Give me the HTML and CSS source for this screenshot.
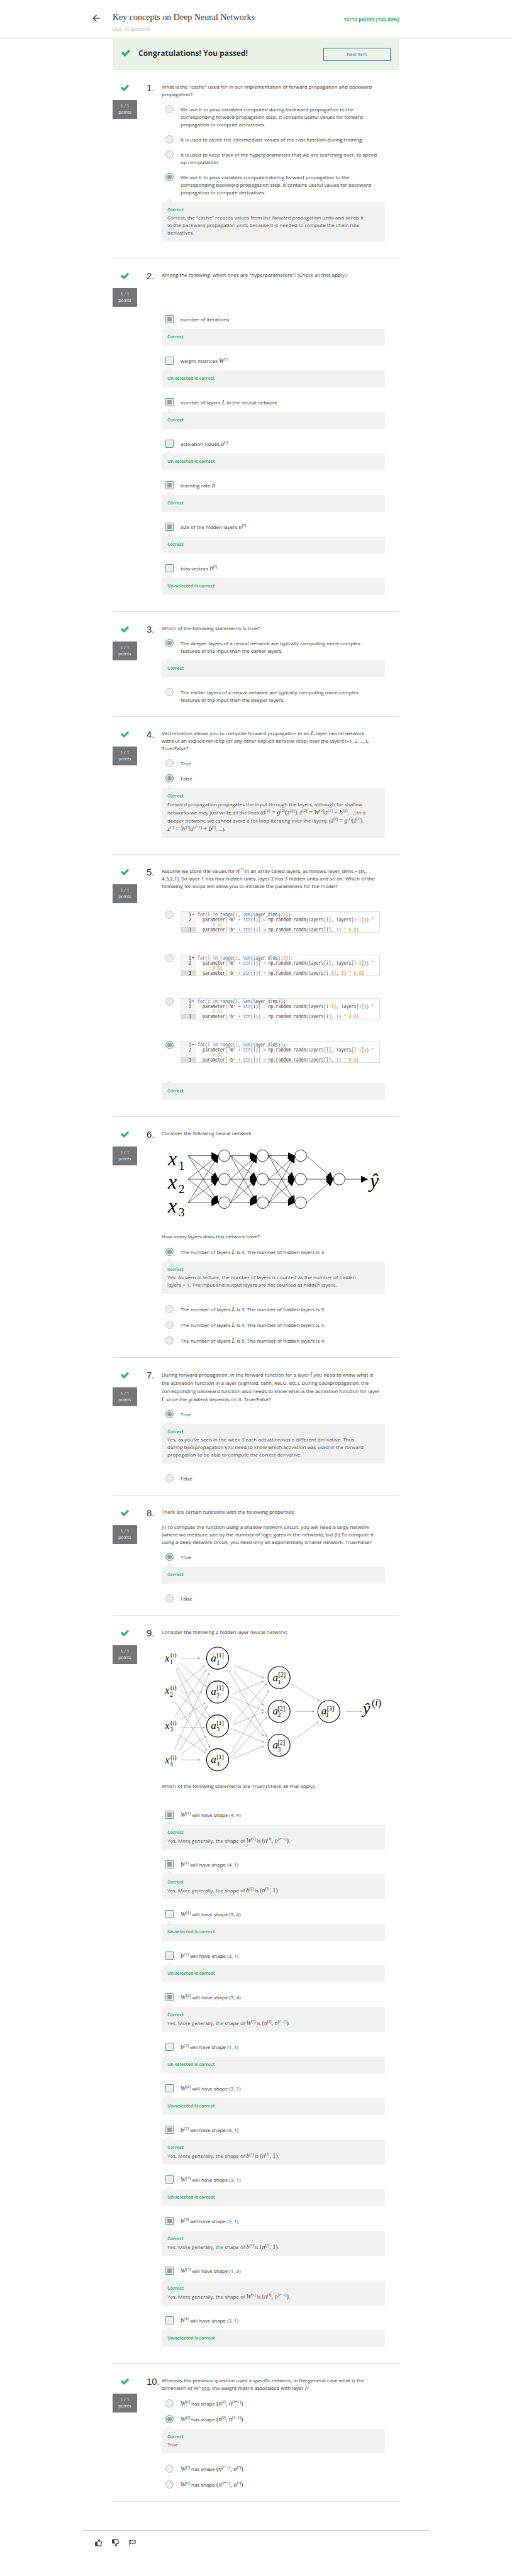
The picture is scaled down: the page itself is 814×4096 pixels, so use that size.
FILE: index.html
```
<!DOCTYPE html>
<html lang="en">
<head>
<meta charset="utf-8">
<meta name="viewport" content="width=device-width, initial-scale=1">
<title>Key concepts on Deep Neural Networks</title>
<link rel="stylesheet" href="styles.css">
</head>
<body>
<svg class="defs" aria-hidden="true">
  <symbol id="check" viewBox="121 356 1550 1188"><path d="M1671 566q0 40-28 68l-724 724-136 136q-28 28-68 28t-68-28l-136-136-362-362q-28-28-28-68t28-68l136-136q28-28 68-28t68 28l294 295 656-657q28-28 68-28t68 28l136 136q28 28 28 68z"/></symbol>
</svg>

<header class="top">
  <div class="wrap top-row">
    <a class="back" href="#" aria-label="Back"><svg viewBox="0 0 12 12"><path d="M6.6 .7 1.2 6l5.4 5.3M1.4 6H12"/></svg></a>
    <div class="titles">
      <h1>Key concepts on Deep Neural Networks</h1>
      <p>Quiz, 10 questions</p>
    </div>
    <strong class="score">10/10 points (100.00%)</strong>
  </div>
</header>

<main class="wrap">
  <div class="banner">
    <svg class="tick big"><use href="#check"/></svg>
    <h2>Congratulations! You passed!</h2>
    <button type="button" class="next">Next Item</button>
  </div>

  <section class="q">
    <div class="grade"><svg class="tick"><use href="#check"/></svg><p class="points">1 / 1<br>points</p></div>
    <div class="num">1.</div>
    <div class="body">
      <p class="ask">What is the "cache" used for in our implementation of forward propagation and backward<br>propagation?</p>
      <div class="opts">
        <label class="opt"><input type="radio" name="q1"><span>We use it to pass variables computed during backward propagation to the<br>corresponding forward propagation step. It contains useful values for forward<br>propagation to compute activations.</span></label>
        <label class="opt"><input type="radio" name="q1"><span>It is used to cache the intermediate values of the cost function during training.</span></label>
        <label class="opt"><input type="radio" name="q1"><span>It is used to keep track of the hyperparameters that we are searching over, to speed<br>up computation.</span></label>
        <div>
          <label class="opt"><input type="radio" name="q1" checked><span>We use it to pass variables computed during forward propagation to the<br>corresponding backward propagation step. It contains useful values for backward<br>propagation to compute derivatives.</span></label>
          <div class="fb"><b>Correct</b><p>Correct, the "cache" records values from the forward propagation units and sends it<br>to the backward propagation units because it is needed to compute the chain rule<br>derivatives.</p></div>
        </div>
      </div>
    </div>
  </section>

  <section class="q">
    <div class="grade"><svg class="tick"><use href="#check"/></svg><p class="points">1 / 1<br>points</p></div>
    <div class="num">2.</div>
    <div class="body">
      <p class="ask">Among the following, which ones are "hyperparameters"? (Check all that apply.)</p>
      <div class="opts far">
        <div><label class="opt"><input type="checkbox" checked><span>number of iterations</span></label><div class="fb"><b>Correct</b></div></div>
        <div><label class="opt"><input type="checkbox"><span>weight matrices <var>W</var><sup>[<i>l</i>]</sup></span></label><div class="fb"><b>Un-selected is correct</b></div></div>
        <div><label class="opt"><input type="checkbox" checked><span>number of layers <var>L</var> in the neural network</span></label><div class="fb"><b>Correct</b></div></div>
        <div><label class="opt"><input type="checkbox"><span>activation values <var>a</var><sup>[<i>l</i>]</sup></span></label><div class="fb"><b>Un-selected is correct</b></div></div>
        <div><label class="opt"><input type="checkbox" checked><span>learning rate <var>α</var></span></label><div class="fb"><b>Correct</b></div></div>
        <div><label class="opt"><input type="checkbox" checked><span>size of the hidden layers <var>n</var><sup>[<i>l</i>]</sup></span></label><div class="fb"><b>Correct</b></div></div>
        <div><label class="opt"><input type="checkbox"><span>bias vectors <var>b</var><sup>[<i>l</i>]</sup></span></label><div class="fb"><b>Un-selected is correct</b></div></div>
      </div>
    </div>
  </section>

  <section class="q">
    <div class="grade"><svg class="tick"><use href="#check"/></svg><p class="points">1 / 1<br>points</p></div>
    <div class="num">3.</div>
    <div class="body">
      <p class="ask">Which of the following statements is true?</p>
      <div class="opts">
        <div>
          <label class="opt"><input type="radio" name="q3" checked><span>The deeper layers of a neural network are typically computing more complex<br>features of the input than the earlier layers.</span></label>
          <div class="fb"><b>Correct</b></div>
        </div>
        <label class="opt"><input type="radio" name="q3"><span>The earlier layers of a neural network are typically computing more complex<br>features of the input than the deeper layers.</span></label>
      </div>
    </div>
  </section>

  <section class="q">
    <div class="grade"><svg class="tick"><use href="#check"/></svg><p class="points">1 / 1<br>points</p></div>
    <div class="num">4.</div>
    <div class="body">
      <p class="ask">Vectorization allows you to compute forward propagation in an <var>L</var>-layer neural network<br>without an explicit for-loop (or any other explicit iterative loop) over the layers l=1, 2, ...,L.<br>True/False?</p>
      <div class="opts">
        <label class="opt"><input type="radio" name="q4"><span>True</span></label>
        <div>
          <label class="opt"><input type="radio" name="q4" checked><span>False</span></label>
          <div class="fb"><b>Correct</b><p class="loose">Forward propagation propagates the input through the layers, although for shallow<br>networks we may just write all the lines (<span class="eq"><var>a</var><sup>[2]</sup> = <var>g</var><sup>[2]</sup>(<var>z</var><sup>[2]</sup>)</span>, <span class="eq"><var>z</var><sup>[2]</sup> = <var>W</var><sup>[2]</sup><var>a</var><sup>[1]</sup> + <var>b</var><sup>[2]</sup></span>, ...) in a<br>deeper network, we cannot avoid a for loop iterating over the layers: (<span class="eq"><var>a</var><sup>[<i>l</i>]</sup> = <var>g</var><sup>[<i>l</i>]</sup>(<var>z</var><sup>[<i>l</i>]</sup>)</span>,<br><span class="eq"><var>z</var><sup>[<i>l</i>]</sup> = <var>W</var><sup>[<i>l</i>]</sup><var>a</var><sup>[<i>l</i>−1]</sup> + <var>b</var><sup>[<i>l</i>]</sup></span>, ...).</p></div>
        </div>
      </div>
    </div>
  </section>

  <section class="q">
    <div class="grade"><svg class="tick"><use href="#check"/></svg><p class="points">1 / 1<br>points</p></div>
    <div class="num">5.</div>
    <div class="body">
      <p class="ask">Assume we store the values for <var>n</var><sup>[<i>l</i>]</sup> in an array called layers, as follows: layer_dims = [<var>n</var><sub>x</sub>,<br>4,3,2,1]. So layer 1 has four hidden units, layer 2 has 3 hidden units and so on. Which of the<br>following for-loops will allow you to initialize the parameters for the model?</p>
      <div class="opts mid">
        <label class="opt code-opt"><input type="radio" name="q5"><span class="code">
          <span class="ln fold">1</span><code><i class="k">for</i>(i <i class="k">in</i> <i class="f">range</i>(<i class="n">1</i>, <i class="f">len</i>(layer_dims)<i class="o">/</i><i class="n">2</i>)):</code>
          <span class="ln">2</span><code>  parameter[<i class="s">‘</i>W<i class="s">’</i> <i class="o">+</i> <i class="f">str</i>(i)] <i class="o">=</i> np.random.randn(layers[i], layers[i<i class="o">-</i><i class="n">1</i>])) <i class="o">*</i>
      <i class="n">0.01</i></code>
          <span class="ln on">3</span><code>  parameter[<i class="s">‘</i>b<i class="s">’</i> <i class="o">+</i> <i class="f">str</i>(i)] <i class="o">=</i> np.random.randn(layers[i], <i class="n">1</i>) <i class="o">*</i> <i class="n cur">0.01</i></code>
        </span></label>
        <label class="opt code-opt"><input type="radio" name="q5"><span class="code">
          <span class="ln fold">1</span><code><i class="k">for</i>(i <i class="k">in</i> <i class="f">range</i>(<i class="n">1</i>, <i class="f">len</i>(layer_dims)<i class="o">/</i><i class="n">2</i>)):</code>
          <span class="ln">2</span><code>  parameter[<i class="s">‘</i>W<i class="s">’</i> <i class="o">+</i> <i class="f">str</i>(i)] <i class="o">=</i> np.random.randn(layers[i], layers[i<i class="o">-</i><i class="n">1</i>])) <i class="o">*</i>
      <i class="n">0.01</i></code>
          <span class="ln on">3</span><code>  parameter[<i class="s">‘</i>b<i class="s">’</i> <i class="o">+</i> <i class="f">str</i>(i)] <i class="o">=</i> np.random.randn(layers[i<i class="o">-</i><i class="n">1</i>], <i class="n">1</i>) <i class="o">*</i> <i class="n cur">0.01</i></code>
        </span></label>
        <label class="opt code-opt"><input type="radio" name="q5"><span class="code">
          <span class="ln fold">1</span><code><i class="k">for</i>(i <i class="k">in</i> <i class="f">range</i>(<i class="n">1</i>, <i class="f">len</i>(layer_dims))):</code>
          <span class="ln">2</span><code>  parameter[<i class="s">‘</i>W<i class="s">’</i> <i class="o">+</i> <i class="f">str</i>(i)] <i class="o">=</i> np.random.randn(layers[i<i class="o">-</i><i class="n">1</i>], layers[i])) <i class="o">*</i>
      <i class="n">0.01</i></code>
          <span class="ln on">3</span><code>  parameter[<i class="s">‘</i>b<i class="s">’</i> <i class="o">+</i> <i class="f">str</i>(i)] <i class="o">=</i> np.random.randn(layers[i], <i class="n">1</i>) <i class="o">*</i> <i class="n cur">0.01</i></code>
        </span></label>
        <div>
          <label class="opt code-opt"><input type="radio" name="q5" checked><span class="code">
          <span class="ln fold">1</span><code><i class="k">for</i>(i <i class="k">in</i> <i class="f">range</i>(<i class="n">1</i>, <i class="f">len</i>(layer_dims))):</code>
          <span class="ln">2</span><code>  parameter[<i class="s">‘</i>W<i class="s">’</i> <i class="o">+</i> <i class="f">str</i>(i)] <i class="o">=</i> np.random.randn(layers[i], layers[i<i class="o">-</i><i class="n">1</i>])) <i class="o">*</i>
      <i class="n">0.01</i></code>
          <span class="ln on">3</span><code>  parameter[<i class="s">‘</i>b<i class="s">’</i> <i class="o">+</i> <i class="f">str</i>(i)] <i class="o">=</i> np.random.randn(layers[i], <i class="n">1</i>) <i class="o">*</i> <i class="n cur">0.01</i></code>
          </span></label>
          <div class="fb"><b>Correct</b></div>
        </div>
      </div>
    </div>
  </section>

  <section class="q">
    <div class="grade"><svg class="tick"><use href="#check"/></svg><p class="points">1 / 1<br>points</p></div>
    <div class="num">6.</div>
    <div class="body">
      <p class="ask">Consider the following neural network.</p>
      <svg class="net" viewBox="0 0 354 152" role="img" aria-label="Network with three inputs, three hidden layers of three units and one output">
        <defs><marker id="head" viewBox="0 0 10 10" refX="10" refY="5" markerWidth="11" markerHeight="11" markerUnits="userSpaceOnUse" orient="auto"><path d="M0 0 10 5 0 10z"/></marker></defs>
        <g class="wire">
          <path d="M42 29.5H90"/><path d="M42 29.5 90 66.8"/><path d="M42 29.5 90 104"/>
          <path d="M42 66.8 90 29.5"/><path d="M42 66.8H90"/><path d="M42 66.8 90 104"/>
          <path d="M42 104 90 29.5"/><path d="M42 104 90 66.8"/><path d="M42 104H90"/>
          <path d="M109 29.5H151"/><path d="M109 29.5 151 66.8"/><path d="M109 29.5 151 104"/>
          <path d="M109 66.8 151 29.5"/><path d="M109 66.8H151"/><path d="M109 66.8 151 104"/>
          <path d="M109 104 151 29.5"/><path d="M109 104 151 66.8"/><path d="M109 104H151"/>
          <path d="M170 29.5H211"/><path d="M170 29.5 211 66.8"/><path d="M170 29.5 211 104"/>
          <path d="M170 66.8 211 29.5"/><path d="M170 66.8H211"/><path d="M170 66.8 211 104"/>
          <path d="M170 104 211 29.5"/><path d="M170 104 211 66.8"/><path d="M170 104H211"/>
          <path d="M230 29.5 272 66.8"/><path d="M230 66.8H272"/><path d="M230 104 272 66.8"/>
          <path d="M291 66.8H327"/>
        </g>
        <g class="unit">
          <circle cx="99.4" cy="29.5" r="9.2"/><circle cx="99.4" cy="66.8" r="9.2"/><circle cx="99.4" cy="104" r="9.2"/>
          <circle cx="160.1" cy="29.5" r="9.2"/><circle cx="160.1" cy="66.8" r="9.2"/><circle cx="160.1" cy="104" r="9.2"/>
          <circle cx="220.4" cy="29.5" r="9.2"/><circle cx="220.4" cy="66.8" r="9.2"/><circle cx="220.4" cy="104" r="9.2"/>
          <circle cx="281.5" cy="66.8" r="9.2"/>
        </g>
        <g class="m32"><text x="10" y="45">x</text><text x="10" y="82">x</text><text x="10" y="120">x</text><text x="330" y="80">ŷ</text></g>
        <g class="m19"><text x="27" y="52">1</text><text x="27" y="89">2</text><text x="27" y="126">3</text></g>
      </svg>
      <p class="ask">How many layers does this network have?</p>
      <div class="opts tall">
        <div>
          <label class="opt"><input type="radio" name="q6" checked><span>The number of layers <var>L</var> is 4. The number of hidden layers is 3.</span></label>
          <div class="fb"><b>Correct</b><p>Yes. As seen in lecture, the number of layers is counted as the number of hidden<br>layers + 1. The input and output layers are not counted as hidden layers.</p></div>
        </div>
        <label class="opt"><input type="radio" name="q6"><span>The number of layers <var>L</var> is 3. The number of hidden layers is 3.</span></label>
        <label class="opt"><input type="radio" name="q6"><span>The number of layers <var>L</var> is 4. The number of hidden layers is 4.</span></label>
        <label class="opt"><input type="radio" name="q6"><span>The number of layers <var>L</var> is 5. The number of hidden layers is 4.</span></label>
      </div>
    </div>
  </section>

  <section class="q">
    <div class="grade"><svg class="tick"><use href="#check"/></svg><p class="points">1 / 1<br>points</p></div>
    <div class="num">7.</div>
    <div class="body">
      <p class="ask loose">During forward propagation, in the forward function for a layer <var>l</var> you need to know what is<br>the activation function in a layer (Sigmoid, tanh, ReLU, etc.). During backpropagation, the<br>corresponding backward function also needs to know what is the activation function for layer<br><var>l</var>, since the gradient depends on it. True/False?</p>
      <div class="opts">
        <div>
          <label class="opt"><input type="radio" name="q7" checked><span>True</span></label>
          <div class="fb"><b>Correct</b><p>Yes, as you've seen in the week 3 each activation has a different derivative. Thus,<br>during backpropagation you need to know which activation was used in the forward<br>propagation to be able to compute the correct derivative.</p></div>
        </div>
        <label class="opt"><input type="radio" name="q7"><span>False</span></label>
      </div>
    </div>
  </section>

  <section class="q">
    <div class="grade"><svg class="tick"><use href="#check"/></svg><p class="points">1 / 1<br>points</p></div>
    <div class="num">8.</div>
    <div class="body">
      <p class="ask">There are certain functions with the following properties:</p>
      <p class="ask more">(i) To compute the function using a shallow network circuit, you will need a large network<br>(where we measure size by the number of logic gates in the network), but (ii) To compute it<br>using a deep network circuit, you need only an exponentially smaller network. True/False?</p>
      <div class="opts">
        <div>
          <label class="opt"><input type="radio" name="q8" checked><span>True</span></label>
          <div class="fb"><b>Correct</b></div>
        </div>
        <label class="opt"><input type="radio" name="q8"><span>False</span></label>
      </div>
    </div>
  </section>

  <section class="q">
    <div class="grade"><svg class="tick"><use href="#check"/></svg><p class="points">1 / 1<br>points</p></div>
    <div class="num">9.</div>
    <div class="body">
      <p class="ask">Consider the following 2 hidden layer neural network:</p>
      <svg class="net" viewBox="0 0 354 232" role="img" aria-label="Network with four inputs, hidden layers of four and three units and one output">
        <defs><marker id="tip" viewBox="0 0 10 10" refX="8" refY="5" markerWidth="3" markerHeight="3" markerUnits="userSpaceOnUse" orient="auto"><path fill="#85878d" d="M0 0 10 5 0 10z"/></marker></defs>
        <g class="thin">
          <path d="M30.9 35.5H60.3"/><path d="M28.3 42 70.9 80.6"/><path d="M24 48.5 76.5 128.1"/><path d="M22.7 52.1 76.2 177.1"/>
          <path d="M28.3 80.4 68 47.5"/><path d="M30.9 89.2H64.3"/><path d="M28 94.6 70.9 130.6"/><path d="M20.9 104.2 71.7 181.8"/>
          <path d="M21.1 127.7 70.9 54"/><path d="M29.6 133.8 68.8 105.7"/><path d="M30.4 145.7H68"/><path d="M26.9 157 69.3 186"/>
          <path d="M20.3 180.3 75.1 59.4"/><path d="M28.3 182.6 72 112.2"/><path d="M30.9 187.8 70.1 159.3"/><path d="M30.9 196.8H60.3"/>
          <path d="M113 46.2 161.5 66.7"/><path d="M113 54.6 161.5 109.9"/><path d="M106.1 54.6 166.3 159.6"/>
          <path d="M113 92.5 161.5 72"/><path d="M113 97.9 161.5 118.7"/><path d="M113 103.8 161.5 158.9"/>
          <path d="M113 138.6 166.3 76"/><path d="M113 141.3 161.5 121"/><path d="M113 148.2 161.5 168.6"/>
          <path d="M109 188 170.2 86.8"/><path d="M108.3 195.2 166.3 129.4"/><path d="M113 195.2 161.5 174.8"/>
          <path d="M205.5 75.7 250 103.4"/><path d="M212.3 119.9H241.5"/><path d="M205.5 168.4 248.6 136.5"/><path d="M292.3 119.9H317.2"/>
        </g>
        <g class="ring">
          <circle cx="88.7" cy="35.5" r="17.5"/><circle cx="88.7" cy="89.2" r="17.5"/><circle cx="88.7" cy="143" r="17.5"/><circle cx="88.7" cy="196.6" r="17.5"/>
          <circle cx="186.1" cy="66.3" r="17.5"/><circle cx="186.1" cy="119.9" r="17.5"/><circle cx="186.1" cy="173.6" r="17.5"/>
          <circle cx="265.1" cy="119.9" r="17.5"/>
        </g>
        <g class="m17">
          <text x="5" y="41">x</text><text x="5" y="92">x</text><text x="5" y="148">x</text><text x="5" y="202">x</text>
          <text x="78" y="41">a</text><text x="78" y="94">a</text><text x="78" y="148">a</text><text x="78" y="201">a</text>
          <text x="176" y="72">a</text><text x="176" y="125">a</text><text x="176" y="179">a</text><text x="253" y="125">a</text>
        </g>
        <g class="m10">
          <text x="14" y="34">(<tspan class="it">i</tspan>)</text><text x="14" y="86">(<tspan class="it">i</tspan>)</text><text x="14" y="142">(<tspan class="it">i</tspan>)</text><text x="14" y="196">(<tspan class="it">i</tspan>)</text>
          <text x="13" y="45">1</text><text x="13" y="97">2</text><text x="13" y="152">3</text><text x="13" y="206">4</text>
          <text x="87" y="34">[1]</text><text x="87" y="86">[1]</text><text x="87" y="142">[1]</text><text x="87" y="195">[1]</text>
          <text x="87" y="46">1</text><text x="87" y="98">2</text><text x="87" y="152">3</text><text x="87" y="206">4</text>
          <text x="185" y="65">[2]</text><text x="184" y="119">[2]</text><text x="184" y="173">[2]</text><text x="262" y="119">[3]</text>
          <text x="184" y="77">1</text><text x="184" y="129">2</text><text x="184" y="183">3</text><text x="260" y="129">1</text>
        </g>
        <g class="m26"><text x="319" y="124">ŷ</text></g>
        <g class="m16"><text x="333" y="112">(<tspan class="it">i</tspan>)</text></g>
      </svg>
      <p class="ask">Which of the following statements are True? (Check all that apply).</p>
      <div class="opts mid">
        <div><label class="opt"><input type="checkbox" checked><span><var>W</var><sup>[1]</sup> will have shape (4, 4)</span></label><div class="fb"><b>Correct</b><p class="loose">Yes. More generally, the shape of <var>W</var><sup>[<i>l</i>]</sup> is <span class="eq">(<var>n</var><sup>[<i>l</i>]</sup>, <var>n</var><sup>[<i>l</i>−1]</sup>)</span>.</p></div></div>
        <div><label class="opt"><input type="checkbox" checked><span><var>b</var><sup>[1]</sup> will have shape (4, 1)</span></label><div class="fb"><b>Correct</b><p class="loose">Yes. More generally, the shape of <var>b</var><sup>[<i>l</i>]</sup> is <span class="eq">(<var>n</var><sup>[<i>l</i>]</sup>, 1)</span>.</p></div></div>
        <div><label class="opt"><input type="checkbox"><span><var>W</var><sup>[1]</sup> will have shape (3, 4)</span></label><div class="fb"><b>Un-selected is correct</b></div></div>
        <div><label class="opt"><input type="checkbox"><span><var>b</var><sup>[1]</sup> will have shape (3, 1)</span></label><div class="fb"><b>Un-selected is correct</b></div></div>
        <div><label class="opt"><input type="checkbox" checked><span><var>W</var><sup>[2]</sup> will have shape (3, 4)</span></label><div class="fb"><b>Correct</b><p class="loose">Yes. More generally, the shape of <var>W</var><sup>[<i>l</i>]</sup> is <span class="eq">(<var>n</var><sup>[<i>l</i>]</sup>, <var>n</var><sup>[<i>l</i>−1]</sup>)</span>.</p></div></div>
        <div><label class="opt"><input type="checkbox"><span><var>b</var><sup>[2]</sup> will have shape (1, 1)</span></label><div class="fb"><b>Un-selected is correct</b></div></div>
        <div><label class="opt"><input type="checkbox"><span><var>W</var><sup>[2]</sup> will have shape (3, 1)</span></label><div class="fb"><b>Un-selected is correct</b></div></div>
        <div><label class="opt"><input type="checkbox" checked><span><var>b</var><sup>[2]</sup> will have shape (3, 1)</span></label><div class="fb"><b>Correct</b><p class="loose">Yes. More generally, the shape of <var>b</var><sup>[<i>l</i>]</sup> is <span class="eq">(<var>n</var><sup>[<i>l</i>]</sup>, 1)</span>.</p></div></div>
        <div><label class="opt"><input type="checkbox"><span><var>W</var><sup>[3]</sup> will have shape (3, 1)</span></label><div class="fb"><b>Un-selected is correct</b></div></div>
        <div><label class="opt"><input type="checkbox" checked><span><var>b</var><sup>[3]</sup> will have shape (1, 1)</span></label><div class="fb"><b>Correct</b><p class="loose">Yes. More generally, the shape of <var>b</var><sup>[<i>l</i>]</sup> is <span class="eq">(<var>n</var><sup>[<i>l</i>]</sup>, 1)</span>.</p></div></div>
        <div><label class="opt"><input type="checkbox" checked><span><var>W</var><sup>[3]</sup> will have shape (1, 3)</span></label><div class="fb"><b>Correct</b><p class="loose">Yes. More generally, the shape of <var>W</var><sup>[<i>l</i>]</sup> is <span class="eq">(<var>n</var><sup>[<i>l</i>]</sup>, <var>n</var><sup>[<i>l</i>−1]</sup>)</span>.</p></div></div>
        <div><label class="opt"><input type="checkbox"><span><var>b</var><sup>[3]</sup> will have shape (3, 1)</span></label><div class="fb"><b>Un-selected is correct</b></div></div>
      </div>
    </div>
  </section>

  <section class="q">
    <div class="grade"><svg class="tick"><use href="#check"/></svg><p class="points">1 / 1<br>points</p></div>
    <div class="num">10.</div>
    <div class="body">
      <p class="ask">Whereas the previous question used a specific network, in the general case what is the<br>dimension of W^{[l]}, the weight matrix associated with layer <var>l</var>?</p>
      <div class="opts tall">
        <label class="opt"><input type="radio" name="q10"><span><var>W</var><sup>[<i>l</i>]</sup> has shape <span class="eq">(<var>n</var><sup>[<i>l</i>]</sup>, <var>n</var><sup>[<i>l</i>+1]</sup>)</span></span></label>
        <div>
          <label class="opt"><input type="radio" name="q10" checked><span><var>W</var><sup>[<i>l</i>]</sup> has shape <span class="eq">(<var>n</var><sup>[<i>l</i>]</sup>, <var>n</var><sup>[<i>l</i>−1]</sup>)</span></span></label>
          <div class="fb"><b>Correct</b><p>True</p></div>
        </div>
        <label class="opt"><input type="radio" name="q10"><span><var>W</var><sup>[<i>l</i>]</sup> has shape <span class="eq">(<var>n</var><sup>[<i>l</i>−1]</sup>, <var>n</var><sup>[<i>l</i>]</sup>)</span></span></label>
        <label class="opt"><input type="radio" name="q10"><span><var>W</var><sup>[<i>l</i>]</sup> has shape <span class="eq">(<var>n</var><sup>[<i>l</i>+1]</sup>, <var>n</var><sup>[<i>l</i>]</sup>)</span></span></label>
      </div>
    </div>
  </section>
</main>

<footer class="foot">
  <button type="button" aria-label="Like"><svg viewBox="0 0 18 20"><path d="M5.5 9.5C8 7.5 9 5.5 9.2 3.2 9.4 1 12.3 1.2 12.2 4c0 1.500-.5 2.500-.9 3.500h4.200c1.500 0 1.800 1.300 1.300 2.500l-.6 6.500c-.2 1.500-.9 2-2 2H9c-1.500 0-2.500-.6-3.500-1.300z"/><path class="solid" d="M1 9h4.500v9H1z"/></svg></button>
  <button type="button" aria-label="Dislike"><svg viewBox="0 0 18 20"><path d="M5.5 10.5C8 12.500 9 14.500 9.200 16.800c.2 2.200 3.100 2 3-.8 0-1.500-.5-2.500-.9-3.500h4.200c1.500 0 1.800-1.300 1.300-2.500l-.6-6.500c-.2-1.500-.9-2-2-2H9C7.500 1.500 6.500 2.100 5.500 2.800z"/><path class="solid" d="M1 2h4.500v9H1z"/></svg></button>
  <button type="button" aria-label="Report"><svg viewBox="0 0 20 20"><path d="M2 1.500V19M3.500 4C7 2.500 9 3 11.500 4s4.500.8 7-.5V12c-2.500 1.300-4.500 1.500-7 .5s-4.500-1.500-8 0z"/></svg></button>
</footer>
</body>
</html>
```

FILE: styles.css
```
* { box-sizing: border-box; }

body {
  margin: 0;
  background: #fff;
  color: #333;
  font: 8px/12px "Open Sans", "Noto Sans", sans-serif;
}

h1, h2, p { margin: 0; }
button { padding: 0; font: inherit; background: none; border: 0; }

.defs { position: absolute; width: 0; height: 0; }
.wrap { max-width: 456px; margin: 0 auto; }

/* header */
.top { height: 61px; border-bottom: 1px solid #bbb; }
.top-row { display: flex; padding-top: 18px; }
.back { width: 32px; margin-left: -32px; padding-top: 5px; }
.back svg { display: block; width: 12px; height: 12px; fill: none; stroke: #1f1f1f; stroke-width: 1.2; }
.titles { flex: 1; }
.titles h1 { font: 400 14px/20px "Liberation Serif", serif; }
.titles p { margin-top: 3px; font-size: 7px; color: #bbb; }
.score { padding-top: 7px; font-size: 8px; color: #2ab573; }

/* result banner */
.banner {
  display: flex;
  align-items: center;
  height: 49px;
  margin: 1px 0;
  padding: 0 14px 4px;
  background: #eaf3e6;
}
.banner h2 { flex: 1; margin-left: 13px; font-size: 12px; line-height: 16px; }
.tick { display: block; width: 13px; height: 10px; fill: #2ab573; }
.tick.big { width: 14px; height: 11px; }
.next { width: 107px; height: 21px; margin-top: 4px; border: 1px solid #2a73cc; color: #2a73cc; font-size: 7px; }

/* question */
.q {
  display: grid;
  grid-template-columns: 39px 39px 1fr;
  padding: 20px 23px 20px 0;
  border-bottom: 1px solid #ddd;
}
.grade .tick { margin: 3px auto 14px; }
.points { padding: 5px 0; background: #757575; color: #eee; font-size: 7px; line-height: 10px; text-align: center; }
.num { padding-left: 15px; font: 15px/16px "Liberation Sans", Arial, sans-serif; white-space: nowrap; }
.ask.more { margin-top: 12px; }
.loose { line-height: 13px; }

.opts { display: flex; flex-direction: column; gap: 12px; margin-top: 12px; }
.opts.mid { margin-top: 34px; }
.opts.far { margin-top: 59px; }
.opt { display: flex; gap: 11px; padding-left: 6px; }
.tall .opt { line-height: 13px; }

input {
  flex: none;
  appearance: none;
  width: 13px;
  height: 13px;
  margin: -1px 0 0;
  border: 1px solid #2ab573;
  border-radius: 1px;
  background: #eee;
}
.tall input { margin-top: 0; }
input[type="radio"] { border-radius: 50%; }
input[type="radio"]:not(:checked) { border-color: #bbb; }
input:checked { background: #999; box-shadow: inset 0 0 0 2px #eee; }

/* feedback note with a pointer under the control */
.fb {
  position: relative;
  margin: 9px 0 6px;
  padding: 7px 9px 8px;
  background: #f1f1f1;
  color: #555;
}
.fb::before {
  content: "";
  position: absolute;
  left: 6px;
  top: -6px;
  border: 6px solid transparent;
  border-top: 0;
  border-bottom-color: #f1f1f1;
}
.fb b { display: block; color: #2ab573; font-size: 7px; }

/* inline maths */
var, .eq { font-family: "Liberation Serif", serif; font-size: 10px; line-height: 0; }
.eq { white-space: nowrap; }
sup, sub { font: 7px/0 "Liberation Serif", serif; }
sup { vertical-align: 4px; }
sub { font-style: italic; vertical-align: -1px; }

/* code listings */
.code-opt { padding-bottom: 23px; }
.code {
  flex: 1;
  display: grid;
  grid-template-columns: 24px 1fr;
  margin-right: 8px;
  border: 1px solid #ddd;
  overflow: hidden;
}
.ln, code { font: 8px/8px "Noto Sans Mono CJK SC", "Liberation Mono", monospace; }
.ln { padding-right: 8px; background: #f5f5f5; text-align: right; }
.ln.fold { position: relative; }
.ln.fold::after {
  content: "";
  position: absolute;
  right: 3px;
  top: 3px;
  border: 2px solid transparent;
  border-top-color: #444;
  border-bottom: 0;
}
.ln.on { background: #dcdcdc; }
code { padding-left: 2px; white-space: pre; color: #4d4d4c; }
code i { font-style: normal; }
.s { font: 7px/0 "Liberation Mono", monospace; }
.k { color: #8959a8; }
.f { color: #4271ae; }
.n { color: #f5871f; }
.o { color: #3e999f; }
.cur { border-right: 1px solid #ddd; }

/* diagrams */
.net { display: block; width: 100%; font-family: "Liberation Serif", serif; }
.wire { fill: none; stroke: #111; stroke-width: .7; }
.wire path { marker-end: url(#head); }
.unit { fill: #fff; stroke: #111; stroke-width: .9; }
.thin { fill: none; stroke: #85878d; stroke-width: .6; }
.thin path { marker-end: url(#tip); }
.ring { fill: #fff; stroke: #000; stroke-width: 1.1; }
.m32 { font-size: 32px; font-style: italic; }
.m26 { font-size: 26px; font-style: italic; }
.m17 { font-size: 17px; font-style: italic; }
.m19 { font-size: 19px; }
.m16 { font-size: 16px; }
.m10 { font-size: 10px; }
.it { font-style: italic; }

/* footer */
.foot {
  display: flex;
  gap: 16px;
  max-width: 554px;
  margin: 45px auto 0;
  padding: 13px 21px;
  border-top: 1px solid #ccc;
}
.foot svg { display: block; width: 11px; height: 12px; fill: none; stroke: #333; stroke-width: 1.8; }
.foot .solid { fill: #333; }
```
